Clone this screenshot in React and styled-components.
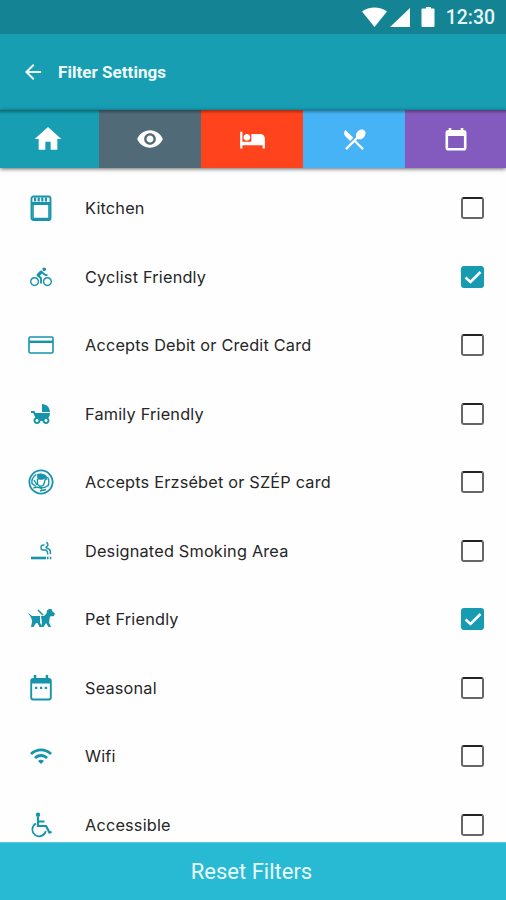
import React from "react";
import styled, { createGlobalStyle } from "styled-components";
import {
  MdArrowBack,
  MdHome,
  MdHotel,
  MdVisibility,
  MdRestaurantMenu,
  MdDirectionsBike,
  MdChildFriendly,
  MdWifi,
} from "react-icons/md";

const GlobalStyle = createGlobalStyle`
  body {
    margin: 0;
    background: #fefefe;
    font-family: Roboto, sans-serif;
  }
  * {
    box-sizing: border-box;
  }
  svg {
    display: block;
  }
`;

const Screen = styled.div`
  width: 506px;
  height: 900px;
  display: flex;
  flex-direction: column;
  overflow: hidden;
  background: #fefefe;
`;

const StatusBar = styled.div`
  height: 34px;
  flex-shrink: 0;
  display: flex;
  align-items: center;
  justify-content: flex-end;
  padding-right: 11px;
  background: #148494;
  color: #e6f6f8;
`;

const Clock = styled.span`
  margin-left: 8px;
  font-weight: 500;
  font-size: 19.4px;
  line-height: 34px;
  padding-top: 2px;
`;

const Header = styled.header`
  height: 76px;
  flex-shrink: 0;
  display: flex;
  align-items: center;
  padding: 0 0 1px 21px;
  background: #179eb3;
  color: #effbfc;
`;

const Title = styled.h1`
  margin: 0 0 0 13px;
  font-weight: 700;
  font-size: 17px;
  line-height: 24px;
  letter-spacing: 0.05px;
`;

const Tabs = styled.nav`
  height: 58px;
  flex-shrink: 0;
  display: grid;
  grid-template-columns: 99px 102px 102px 102px 101px;
  position: relative;
  z-index: 1;
  box-shadow: 0 1px 4px rgba(0, 0, 0, 0.6);
`;

const Tab = styled.button`
  display: flex;
  align-items: center;
  justify-content: center;
  padding: ${(props) => (props.$first ? "0 4px 0 0" : "0")};
  border: none;
  background: linear-gradient(rgba(0, 0, 0, 0.35), rgba(0, 0, 0, 0) 4px),
    ${(props) => props.$color};
  color: #fff;
`;

const List = styled.ul`
  flex: 1;
  min-height: 0;
  margin: 0;
  padding: 6px 0 0;
  list-style: none;
  overflow: hidden;
`;

const Row = styled.li`
  height: 68.5px;
  display: grid;
  grid-template-columns: 28px 1fr 23px;
  column-gap: 30px;
  align-items: center;
  padding: 0 22px 0 27px;
`;

const RowIcon = styled.span`
  display: flex;
  align-items: center;
  justify-content: center;
  color: #1694ab;
`;

const Label = styled.span`
  font-family: Inter, sans-serif;
  font-size: 16.3px;
  line-height: 22px;
  letter-spacing: 0.19px;
  color: #262626;
  white-space: nowrap;
`;

const Checkbox = styled.span`
  width: 23px;
  height: 22px;
  display: flex;
  align-items: center;
  justify-content: center;
  border: 2px solid ${(props) => (props.$checked ? "#179bb0" : "#666")};
  border-top-color: ${(props) => (props.$checked ? "#179bb0" : "#222")};
  border-radius: 3px;
  background: ${(props) => (props.$checked ? "#179bb0" : "transparent")};
`;

const ResetButton = styled.button`
  height: 58px;
  flex-shrink: 0;
  padding: 0 3px 1px 0;
  border: none;
  border-top: 1px solid #5bcada;
  background: #27bad2;
  color: #e9fafd;
  font-family: Roboto, sans-serif;
  font-size: 22px;
`;

function SignalIcons() {
  return (
    <svg width="76" height="24" viewBox="0 0 76 24" fill="#fff">
      <path d="M0 6.500C7 1 18 1 25 6.500L12.500 22Z" />
      <path d="M48 3v19H28Z" />
      <path d="M64 2h5v1.500h2.500q1 0 1 1V21q0 1-1 1h-11q-1 0-1-1V4.500q0-1 1-1H64Z" />
    </svg>
  );
}

function EventIcon() {
  return (
    <svg width="22" height="24" viewBox="0 0 22 24">
      <path d="M5 1v4M17 1v4" stroke="#fff" strokeWidth="2.600" />
      <rect x="1.800" y="4.300" width="18.400" height="18" rx="1.500" fill="none" stroke="#fff" strokeWidth="2.600" />
      <path d="M2 4h18v5H2Z" fill="#fff" />
    </svg>
  );
}

function OvenIcon() {
  return (
    <svg width="22" height="26" viewBox="0 0 22 26" fill="none" stroke="currentColor">
      <rect x="1.500" y="1.500" width="19" height="23.500" rx="2" strokeWidth="1.900" />
      <path d="M2 8.500h18" strokeWidth="3" />
      <path d="M4 4.500h14" strokeWidth="4" strokeDasharray="2.200 1.400" />
      <path d="M3 10v13.500h16V10" strokeWidth="1.600" />
    </svg>
  );
}

function CardIcon() {
  return (
    <svg width="26" height="20" viewBox="0 0 26 20" fill="none" stroke="currentColor">
      <rect x="1" y="2" width="24" height="16" rx="1.500" strokeWidth="1.600" />
      <path d="M1 6.800h24" strokeWidth="2.400" />
    </svg>
  );
}

function BadgeIcon() {
  return (
    <svg width="26" height="26" viewBox="0 0 26 26" fill="none" stroke="currentColor">
      <circle cx="13" cy="13" r="11.600" strokeWidth="1.800" />
      <path d="M9 5.500q4-2 9 1l1 4-2-1q-3 1.500-7 .5Z" fill="currentColor" strokeWidth="0.800" />
      <path d="M8 5.500q-5 4-4 9l4 3M9.500 10v5q2 4 6 1l2-6M6 11l3 5M19.500 8q2.500 4 .5 9" strokeWidth="1.400" />
      <path d="M5 19q7-2 9 1.500M11 18q5 2 9-1.500M12 22l6-1.500" strokeWidth="1.300" />
    </svg>
  );
}

function SmokeIcon() {
  return (
    <svg width="24" height="22" viewBox="0 0 24 22" fill="none" stroke="currentColor">
      <path d="M2 18h15" strokeWidth="2.600" />
      <path d="M18.700 16.700v2.600M21.500 16.700v2.600" strokeWidth="1.600" />
      <path d="M15.500 5q-3.500-.5-3.500 2.500t4 2.500q2.700 0 2.700 4.500M17.500 2q2.500 3 .5 4.500-2 1 .5 2 3 0 3 5.500" strokeWidth="1.500" />
    </svg>
  );
}

function DogIcon() {
  return (
    <svg width="28" height="22" viewBox="0 0 28 22" fill="currentColor">
      <path d="M.8 4.500L5 8h8v6.500l2 4.500h-2.500L10.500 15H9L6.500 19H4l1.200-6L4 9.500Z" />
      <path d="M14 8h3l2.500-2.500.5-3 2-1.500h2.500l1 2.500 2.500 2-1 2.500-4 .5-1 6 2 4.500h-2.500L19 15l-2.500 4H14l1-4.500Z" />
      <path d="M11 2l5 5" stroke="currentColor" strokeWidth="1.500" />
    </svg>
  );
}

function SeasonIcon() {
  return (
    <svg width="24" height="26" viewBox="0 0 24 26">
      <rect x="2.200" y="4" width="19.600" height="20.500" rx="2" fill="none" stroke="currentColor" strokeWidth="1.900" />
      <path d="M2 4h20v4.500H2ZM4.800 0h2.500v5H4.800ZM16.700 0h2.500v5h-2.500Z" fill="currentColor" />
      <path d="M6 12.800h2.300M10.900 12.800h2.300M15.800 12.800h2.300" stroke="currentColor" strokeWidth="2.300" />
    </svg>
  );
}

function WheelchairIcon() {
  return (
    <svg width="24" height="26" viewBox="0 0 24 26" fill="none" stroke="currentColor">
      <circle cx="9" cy="2.700" r="2.200" fill="currentColor" stroke="none" />
      <path d="M9 5v9h8l3.500 6.500 2-.8M9 9.500h6.500" strokeWidth="2.200" />
      <path d="M7 11.500A6.800 6.800 0 1 0 16.800 19" strokeWidth="1.700" />
    </svg>
  );
}

const tabs = [
  { color: "#179eb3", icon: <MdHome size={32} />, first: true },
  { color: "#506a78", icon: <MdVisibility size={28} /> },
  { color: "#ff431c", icon: <MdHotel size={27} /> },
  { color: "#45b3f5", icon: <MdRestaurantMenu size={27} /> },
  { color: "#835bbe", icon: <EventIcon /> },
];

const filters = [
  { label: "Kitchen", icon: <OvenIcon /> },
  { label: "Cyclist Friendly", icon: <MdDirectionsBike size={22} />, checked: true },
  { label: "Accepts Debit or Credit Card", icon: <CardIcon /> },
  { label: "Family Friendly", icon: <MdChildFriendly size={24} /> },
  { label: "Accepts Erzsébet or SZÉP card", icon: <BadgeIcon /> },
  { label: "Designated Smoking Area", icon: <SmokeIcon /> },
  { label: "Pet Friendly", icon: <DogIcon />, checked: true },
  { label: "Seasonal", icon: <SeasonIcon /> },
  { label: "Wifi", icon: <MdWifi size={24} /> },
  { label: "Accessible", icon: <WheelchairIcon /> },
];

function App() {
  return (
    <Screen>
      <GlobalStyle />
      <StatusBar>
        <SignalIcons />
        <Clock>12:30</Clock>
      </StatusBar>
      <Header>
        <MdArrowBack size={24} />
        <Title>Filter Settings</Title>
      </Header>
      <Tabs>
        {tabs.map((tab) => (
          <Tab key={tab.color} $color={tab.color} $first={tab.first}>
            {tab.icon}
          </Tab>
        ))}
      </Tabs>
      <List>
        {filters.map((item) => (
          <Row key={item.label}>
            <RowIcon>{item.icon}</RowIcon>
            <Label>{item.label}</Label>
            <Checkbox $checked={item.checked}>
              {item.checked && (
                <svg width="18" height="14" viewBox="0 0 18 14" fill="none">
                  <path d="M1.500 7.500l5 4.500L16.500 2" stroke="#fff" strokeWidth="2.500" />
                </svg>
              )}
            </Checkbox>
          </Row>
        ))}
      </List>
      <ResetButton>Reset Filters</ResetButton>
    </Screen>
  );
}

export default App;
